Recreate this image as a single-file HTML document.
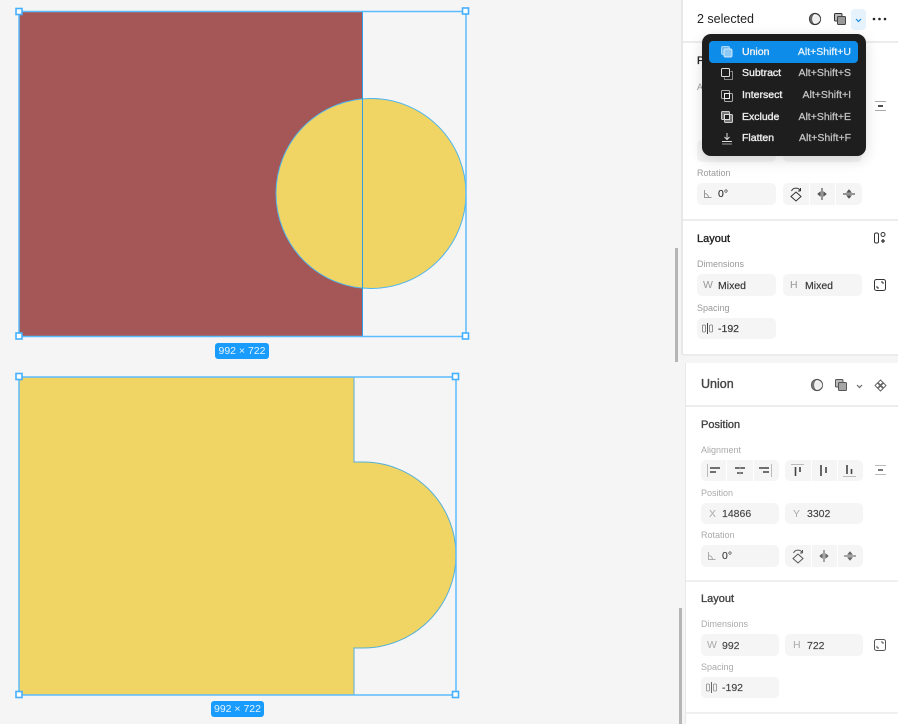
<!DOCTYPE html>
<html>
<head>
<meta charset="utf-8">
<style>
html,body{margin:0;padding:0;background:#f5f5f5;}
body{width:898px;height:724px;overflow:hidden;position:relative;font-family:"Liberation Sans",sans-serif;color:#222;}
#w{position:absolute;left:0;top:0;width:898px;height:724px;filter:blur(.3px);}
.a{position:absolute;}
.t{position:absolute;white-space:nowrap;line-height:14px;}
.h{font-size:11px;color:#222;-webkit-text-stroke:.35px currentColor;}
.l{font-size:9px;color:#999;}
.f{position:absolute;background:#f5f5f5;border-radius:5px;}
.v{position:absolute;font-size:10.5px;color:#333;white-space:nowrap;line-height:14px;-webkit-text-stroke:.15px currentColor;}
.g{position:absolute;font-size:10.5px;color:#999;line-height:14px;}
.hr{position:absolute;height:2px;background:#ececec;}
svg{position:absolute;overflow:visible;}
.m{position:absolute;font-size:10.5px;color:#eee;line-height:14px;white-space:nowrap;-webkit-text-stroke:.35px currentColor;}
.k{position:absolute;font-size:10.5px;color:#c4c4c4;line-height:14px;white-space:nowrap;text-align:right;-webkit-text-stroke:.25px currentColor;}
.tag{position:absolute;background:#1a9cff;color:#e4f3ff;font-size:10.5px;border-radius:3px;text-align:center;line-height:16px;height:16px;}
</style>
</head>
<body>
<div id="w">
<svg class="a" style="left:0;top:0" width="680" height="724" viewBox="0 0 680 724">
  <rect x="19" y="11" width="343" height="325" fill="#a55656"/>
  <circle cx="371" cy="193.5" r="95" fill="#f1d564"/>
  <circle cx="371" cy="193.5" r="95" fill="none" stroke="#4db4ee" stroke-width="1"/>
  <path d="M362.5 11V336" stroke="#2f9fe8" stroke-width="1"/>
  <rect x="19" y="11.500" width="447" height="325" fill="none" stroke="#5cbcff" stroke-width="1.500"/>
  <g fill="#fff" stroke="#45b0ff" stroke-width="1.600">
    <rect x="16" y="8.500" width="6" height="6"/>
    <rect x="462.500" y="8" width="6" height="6"/>
    <rect x="16" y="333" width="6" height="6"/>
    <rect x="462.500" y="333" width="6" height="6"/>
  </g>
  <path d="M19 377H354V462H363A93 93 0 0 1 363 648H354V695H19Z" fill="#f1d564" stroke="#55b0d8" stroke-width="1"/>
  <rect x="19" y="377" width="437" height="318" fill="none" stroke="#5cbcff" stroke-width="1.500"/>
  <g fill="#fff" stroke="#45b0ff" stroke-width="1.600">
    <rect x="16" y="373.500" width="6" height="6"/>
    <rect x="452.500" y="373.500" width="6" height="6"/>
    <rect x="16" y="691.500" width="6" height="6"/>
    <rect x="452.500" y="691.500" width="6" height="6"/>
  </g>
</svg>
<div class="tag" style="left:215px;top:343px;width:54px;">992 × 722</div>
<div class="tag" style="left:211px;top:701px;width:53px;">992 × 722</div>

<div class="a" style="left:675px;top:248px;width:3px;height:114px;background:#b5b5b5;"></div>
<div class="a" style="left:679px;top:608px;width:3px;height:116px;background:#b5b5b5;"></div>

<!-- Panel 1 -->
<div class="a" style="left:681px;top:0;width:217px;height:355px;background:#fff;border-left:2px solid #e8e8e8;box-sizing:border-box;"></div>
<div class="hr" style="left:683px;top:41px;width:215px;"></div>
<div class="hr" style="left:683px;top:219px;width:215px;"></div>
<div class="hr" style="left:683px;top:354px;width:215px;"></div>
<div class="t" style="left:697px;top:12px;font-size:12.500px;color:#222;">2 selected</div>

<svg style="left:808px;top:12px" width="14" height="14" viewBox="0 0 14 14"><circle cx="7" cy="7" r="5.500" fill="#fff" stroke="#333" stroke-width="1.200"/><path d="M6.500 2A5 5 0 0 0 6.500 12A6.500 6.500 0 0 1 6.500 2Z" fill="#666"/><circle cx="8.500" cy="7" r="3.800" fill="#eee"/></svg>
<svg style="left:834px;top:13px" width="12" height="12" viewBox="0 0 12 12"><rect x=".5" y=".5" width="7.500" height="7.500" rx="1" fill="#bbb" stroke="#333"/><rect x="3.500" y="3.500" width="8" height="8" rx="1" fill="#999" stroke="#444"/></svg>
<div class="a" style="left:851px;top:9px;width:15px;height:21px;background:#e6f3fd;border-radius:4px;"></div>
<svg style="left:855px;top:18px" width="7" height="5" viewBox="0 0 7 5"><path d="M1 1L3.500 3.500L6 1" fill="none" stroke="#1a8be0" stroke-width="1.200"/></svg>
<svg style="left:872px;top:17px" width="15" height="4" viewBox="0 0 15 4"><circle cx="2" cy="2" r="1.300" fill="#222"/><circle cx="7.500" cy="2" r="1.300" fill="#222"/><circle cx="13" cy="2" r="1.300" fill="#222"/></svg>

<div class="t h" style="left:697px;top:54px;">Position</div>
<div class="t l" style="left:697px;top:80px;">Alignment</div>
<svg style="left:875px;top:100px" width="12" height="12" viewBox="0 0 12 12"><path d="M0 1.500H11M0 10.500H11" stroke="#aaa"/><path d="M3 6H8" stroke="#222" stroke-width="1.600"/></svg>
<div class="f" style="left:697px;top:140px;width:79px;height:22px;"></div>
<div class="f" style="left:783px;top:140px;width:79px;height:22px;"></div>
<div class="t l" style="left:697px;top:166px;">Rotation</div>
<div class="f" style="left:697px;top:183px;width:79px;height:22px;"></div>
<svg style="left:703px;top:189px" width="10" height="10" viewBox="0 0 10 10"><path d="M1.500 1V8.500H8.500M1.500 4.500A4 4 0 0 1 5.500 8.500" fill="none" stroke="#999"/></svg>
<div class="v" style="left:718px;top:187px;">0°</div>
<div class="f" style="left:783px;top:183px;width:79px;height:22px;"></div>
<div class="a" style="left:809px;top:183px;width:1px;height:22px;background:#fff;"></div>
<div class="a" style="left:835px;top:183px;width:1px;height:22px;background:#fff;"></div>
<svg style="left:790px;top:186px" width="12" height="16" viewBox="0 0 12 16"><path d="M6 6L11 10.500L6 15L1 10.500Z" fill="none" stroke="#333"/><path d="M1.500 5A5 5 0 0 1 10.500 5M10.500 5L10.500 2M10.500 5L8 5" fill="none" stroke="#333"/></svg>
<svg style="left:816px;top:188px" width="12" height="12" viewBox="0 0 12 12"><path d="M6 0V12" stroke="#333"/><path d="M4.500 3.500V8.500L1.500 6ZM7.500 3.500V8.500L10.500 6Z" fill="#555" stroke="#555" stroke-width=".5"/></svg>
<svg style="left:843px;top:188px" width="12" height="12" viewBox="0 0 12 12"><path d="M0 6H12" stroke="#333"/><path d="M3.500 4.500H8.500L6 1.500ZM3.500 7.500H8.500L6 10.500Z" fill="#555" stroke="#555" stroke-width=".5"/></svg>

<div class="t h" style="left:697px;top:232px;">Layout</div>
<svg style="left:873px;top:231px" width="14" height="14" viewBox="0 0 14 14"><rect x="1.500" y="2" width="4" height="10" rx="1.500" fill="none" stroke="#333"/><circle cx="10" cy="3.500" r="2" fill="none" stroke="#333"/><path d="M10 8V12M8 10H12" stroke="#333" stroke-width="1.300"/></svg>
<div class="t l" style="left:697px;top:257px;">Dimensions</div>
<div class="f" style="left:697px;top:274px;width:79px;height:22px;"></div>
<div class="g" style="left:703px;top:278px;">W</div>
<div class="v" style="left:718px;top:279px;">Mixed</div>
<div class="f" style="left:783px;top:274px;width:79px;height:22px;"></div>
<div class="g" style="left:790px;top:278px;">H</div>
<div class="v" style="left:805px;top:279px;">Mixed</div>
<svg style="left:874px;top:279px" width="12" height="12" viewBox="0 0 12 12"><rect x=".5" y=".5" width="11" height="11" rx="2" fill="none" stroke="#333"/><path d="M3 9V7M3 9H5M9 3V5M9 3H7" stroke="#333"/></svg>
<div class="t l" style="left:697px;top:301px;">Spacing</div>
<div class="f" style="left:697px;top:318px;width:79px;height:21px;"></div>
<svg style="left:702px;top:323px" width="11" height="11" viewBox="0 0 11 11"><rect x=".5" y="2" width="3" height="7" rx="1" fill="none" stroke="#777" stroke-width=".8"/><rect x="7.500" y="2" width="3" height="7" rx="1" fill="none" stroke="#777" stroke-width=".8"/><path d="M5.500 0V11" stroke="#444"/></svg>
<div class="v" style="left:718px;top:322px;">-192</div>

<!-- Dropdown -->
<div class="a" style="left:702px;top:34px;width:164px;height:122px;background:#1e1e1e;border-radius:9px;box-shadow:0 4px 14px rgba(0,0,0,.14);"></div>
<div class="a" style="left:709px;top:41px;width:149px;height:22px;background:#0d8ce9;border-radius:4px;"></div>
<svg style="left:721px;top:46px" width="12" height="12" viewBox="0 0 12 12"><rect x=".5" y=".5" width="8" height="8" rx="1.500" fill="#6db9f0" stroke="#a8d8f8"/><rect x="3" y="3" width="8" height="8" rx="1.500" fill="#8ccaf5" stroke="#cfe9fb"/></svg>
<div class="m" style="left:742px;top:45px;color:#f2f2f2;">Union</div><div class="k" style="right:47px;top:45px;color:#e6f3fd;">Alt+Shift+U</div>
<svg style="left:721px;top:68px" width="12" height="12" viewBox="0 0 12 12"><rect x=".5" y=".5" width="8" height="8" rx="1" fill="none" stroke="#ddd"/><path d="M9.500 3.500H11.500V11.500H3.500V9.500" fill="none" stroke="#888"/></svg>
<div class="m" style="left:742px;top:66px;">Subtract</div><div class="k" style="right:47px;top:66px;">Alt+Shift+S</div>
<svg style="left:721px;top:90px" width="12" height="12" viewBox="0 0 12 12"><rect x=".5" y=".5" width="8" height="8" rx="1" fill="none" stroke="#aaa"/><rect x="3.500" y="3.500" width="8" height="8" rx="1" fill="none" stroke="#aaa"/><rect x="3.500" y="3.500" width="5" height="5" fill="none" stroke="#eee"/></svg>
<div class="m" style="left:742px;top:88px;">Intersect</div><div class="k" style="right:47px;top:88px;">Alt+Shift+I</div>
<svg style="left:721px;top:111px" width="12" height="12" viewBox="0 0 12 12"><rect x=".5" y=".5" width="8" height="8" rx="1" fill="#777" stroke="#ccc"/><rect x="3.500" y="3.500" width="8" height="8" rx="1" fill="#777" stroke="#ccc"/><rect x="3.500" y="3.500" width="5" height="5" fill="#1e1e1e" stroke="#ddd"/></svg>
<div class="m" style="left:742px;top:110px;">Exclude</div><div class="k" style="right:47px;top:110px;">Alt+Shift+E</div>
<svg style="left:721px;top:133px" width="12" height="12" viewBox="0 0 12 12"><path d="M6 0V6M3.500 4L6 6.500L8.500 4" fill="none" stroke="#ddd"/><path d="M1 8.500H11" stroke="#ddd"/><path d="M1 11H11" stroke="#999"/></svg>
<div class="m" style="left:742px;top:131px;">Flatten</div><div class="k" style="right:47px;top:131px;">Alt+Shift+F</div>

<!-- Panel 2 -->
<div class="a" style="left:685px;top:363px;width:213px;height:361px;background:#fff;border-left:1px solid #e8e8e8;box-sizing:border-box;"></div>
<div class="hr" style="left:686px;top:405px;width:212px;"></div>
<div class="hr" style="left:686px;top:580px;width:212px;background:#f0f0f0"></div>
<div class="hr" style="left:686px;top:712px;width:212px;background:#f0f0f0"></div>
<div class="t" style="left:701px;top:377px;font-size:12.500px;color:#444;-webkit-text-stroke:.35px #444;">Union</div>
<svg style="left:810px;top:378px" width="14" height="14" viewBox="0 0 14 14"><circle cx="7" cy="7" r="5.500" fill="#fff" stroke="#555" stroke-width="1.200"/><path d="M6.500 2A5 5 0 0 0 6.500 12A6.500 6.500 0 0 1 6.500 2Z" fill="#777"/><circle cx="8.500" cy="7" r="3.800" fill="#eee"/></svg>
<svg style="left:835px;top:379px" width="12" height="12" viewBox="0 0 12 12"><rect x=".5" y=".5" width="7.500" height="7.500" rx="1" fill="#bbb" stroke="#555"/><rect x="3.500" y="3.500" width="8" height="8" rx="1" fill="#a5a5a5" stroke="#555"/></svg>
<svg style="left:856px;top:384px" width="7" height="5" viewBox="0 0 7 5"><path d="M1 1L3.500 3.500L6 1" fill="none" stroke="#666" stroke-width="1.200"/></svg>
<svg style="left:874px;top:379px" width="13" height="13" viewBox="0 0 13 13"><path d="M6.500 1L9 3.500L6.500 6L4 3.500ZM6.500 7L9 9.500L6.500 12L4 9.500ZM3.500 4L6 6.500L3.500 9L1 6.500ZM9.500 4L12 6.500L9.500 9L7 6.500Z" fill="none" stroke="#666"/></svg>

<div class="t h" style="left:701px;top:418px;color:#444;">Position</div>
<div class="t l" style="left:701px;top:443px;color:#aaa;">Alignment</div>
<div class="f" style="left:701px;top:460px;width:78px;height:21px;"></div>
<div class="a" style="left:726px;top:460px;width:1px;height:21px;background:#fff;"></div>
<div class="a" style="left:753px;top:460px;width:1px;height:21px;background:#fff;"></div>
<div class="f" style="left:785px;top:460px;width:78px;height:21px;"></div>
<div class="a" style="left:811px;top:460px;width:1px;height:21px;background:#fff;"></div>
<div class="a" style="left:837px;top:460px;width:1px;height:21px;background:#fff;"></div>
<svg style="left:707px;top:464px" width="14" height="13" viewBox="0 0 14 13"><path d="M.5 0V13" stroke="#bbb"/><path d="M3 4H13M3 8H9" stroke="#444" stroke-width="1.600"/></svg>
<svg style="left:733px;top:464px" width="14" height="13" viewBox="0 0 14 13"><path d="M2 4H12M4 9H10" stroke="#444" stroke-width="1.600"/><path d="M7 0V13" stroke="#ddd" stroke-width=".5"/></svg>
<svg style="left:758px;top:464px" width="14" height="13" viewBox="0 0 14 13"><path d="M13.500 0V13" stroke="#bbb"/><path d="M1 4H11M5 8H11" stroke="#444" stroke-width="1.600"/></svg>
<svg style="left:791px;top:464px" width="13" height="13" viewBox="0 0 13 13"><path d="M0 .5H13" stroke="#bbb"/><path d="M4.500 3V12M9 3V8" stroke="#444" stroke-width="1.600"/></svg>
<svg style="left:817px;top:464px" width="13" height="13" viewBox="0 0 13 13"><path d="M4 1V12M9 3V9" stroke="#444" stroke-width="1.600"/></svg>
<svg style="left:843px;top:464px" width="13" height="13" viewBox="0 0 13 13"><path d="M0 12.500H13" stroke="#bbb"/><path d="M4 1V10M8.500 5V10" stroke="#444" stroke-width="1.600"/></svg>
<svg style="left:875px;top:464px" width="12" height="12" viewBox="0 0 12 12"><path d="M0 1.500H11M0 10.500H11" stroke="#bbb"/><path d="M3 6H8" stroke="#555" stroke-width="1.600"/></svg>

<div class="t l" style="left:701px;top:486px;color:#aaa;">Position</div>
<div class="f" style="left:701px;top:503px;width:78px;height:21px;"></div>
<div class="g" style="left:709px;top:507px;color:#aaa;">X</div>
<div class="v" style="left:722px;top:507px;color:#444;">14866</div>
<div class="f" style="left:785px;top:503px;width:78px;height:21px;"></div>
<div class="g" style="left:793px;top:507px;color:#aaa;">Y</div>
<div class="v" style="left:807px;top:507px;color:#444;">3302</div>
<div class="t l" style="left:701px;top:528px;color:#aaa;">Rotation</div>
<div class="f" style="left:701px;top:545px;width:78px;height:22px;"></div>
<svg style="left:707px;top:551px" width="10" height="10" viewBox="0 0 10 10"><path d="M1.500 1V8.500H8.500M1.500 4.500A4 4 0 0 1 5.500 8.500" fill="none" stroke="#aaa"/></svg>
<div class="v" style="left:722px;top:549px;color:#444;">0°</div>
<div class="f" style="left:785px;top:545px;width:78px;height:22px;"></div>
<div class="a" style="left:811px;top:545px;width:1px;height:22px;background:#fff;"></div>
<div class="a" style="left:837px;top:545px;width:1px;height:22px;background:#fff;"></div>
<svg style="left:792px;top:548px" width="12" height="16" viewBox="0 0 12 16"><path d="M6 6L11 10.500L6 15L1 10.500Z" fill="none" stroke="#555"/><path d="M1.500 5A5 5 0 0 1 10.500 5M10.500 5L10.500 2M10.500 5L8 5" fill="none" stroke="#555"/></svg>
<svg style="left:818px;top:550px" width="12" height="12" viewBox="0 0 12 12"><path d="M6 0V12" stroke="#555"/><path d="M4.500 3.500V8.500L1.500 6ZM7.500 3.500V8.500L10.500 6Z" fill="#666" stroke="#666" stroke-width=".5"/></svg>
<svg style="left:844px;top:550px" width="12" height="12" viewBox="0 0 12 12"><path d="M0 6H12" stroke="#555"/><path d="M3.500 4.500H8.500L6 1.500ZM3.500 7.500H8.500L6 10.500Z" fill="#666" stroke="#666" stroke-width=".5"/></svg>

<div class="t h" style="left:701px;top:592px;color:#444;">Layout</div>
<div class="t l" style="left:701px;top:617px;color:#aaa;">Dimensions</div>
<div class="f" style="left:701px;top:634px;width:78px;height:22px;"></div>
<div class="g" style="left:707px;top:638px;color:#aaa;">W</div>
<div class="v" style="left:722px;top:639px;color:#444;">992</div>
<div class="f" style="left:785px;top:634px;width:78px;height:22px;"></div>
<div class="g" style="left:793px;top:638px;color:#aaa;">H</div>
<div class="v" style="left:807px;top:639px;color:#444;">722</div>
<svg style="left:874px;top:639px" width="12" height="12" viewBox="0 0 12 12"><rect x=".5" y=".5" width="11" height="11" rx="2" fill="none" stroke="#555"/><path d="M3 9V7M3 9H5M9 3V5M9 3H7" stroke="#555"/></svg>
<div class="t l" style="left:701px;top:660px;color:#aaa;">Spacing</div>
<div class="f" style="left:701px;top:677px;width:78px;height:21px;"></div>
<svg style="left:706px;top:682px" width="11" height="11" viewBox="0 0 11 11"><rect x=".5" y="2" width="3" height="7" rx="1" fill="none" stroke="#888" stroke-width=".8"/><rect x="7.500" y="2" width="3" height="7" rx="1" fill="none" stroke="#888" stroke-width=".8"/><path d="M5.500 0V11" stroke="#666"/></svg>
<div class="v" style="left:722px;top:681px;color:#444;">-192</div>
</div>
</body>
</html>
